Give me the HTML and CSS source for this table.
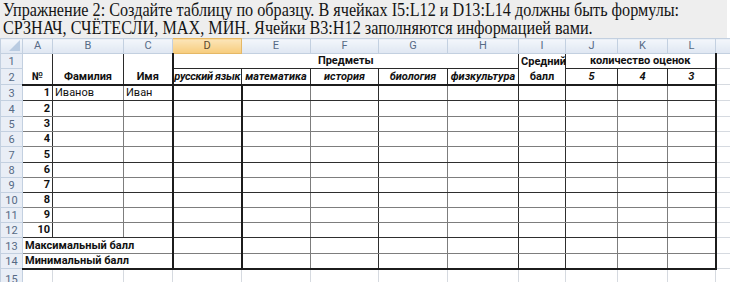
FILE: index.html
```html
<!DOCTYPE html>
<html lang="ru">
<head>
<meta charset="utf-8">
<title>Упражнение 2</title>
<link rel="stylesheet" href="styles.css">
</head>
<body>
<div class="task"><div class="task-text">Упражнение 2: Создайте таблицу по образцу. В ячейках I5:L12 и D13:L14 должны быть формулы:<br>СРЗНАЧ, СЧЁТЕСЛИ, MAX, МИН. Ячейки B3:H12 заполняются информацией вами.</div></div>
<table class="sheet">
<colgroup>
<col class="c-rn"><col class="c-a"><col class="c-b"><col class="c-c"><col class="c-d"><col class="c-e"><col class="c-f"><col class="c-g"><col class="c-h"><col class="c-i"><col class="c-j"><col class="c-k"><col class="c-l"><col class="c-m">
</colgroup>
<tr class="colhdr">
<th class="corner"><span class="tri"></span></th><th>A</th><th>B</th><th>C</th><th class="sel">D</th><th>E</th><th>F</th><th>G</th><th>H</th><th>I</th><th>J</th><th>K</th><th>L</th><th></th>
</tr>
<tr class="h15 r1">
<th class="rn">1</th>
<td rowspan="2" class="b ctr rd bt">№</td>
<td rowspan="2" class="b ctr rd bt">Фамилия</td>
<td rowspan="2" class="b ctr rt bt">Имя</td>
<td colspan="5" class="b ctr rd bd">Предметы</td>
<td class="b ctr rd bn">Средний</td>
<td colspan="3" class="b ctr rt bd">количество оценок</td>
<td class="x"></td>
</tr>
<tr class="h16 r2">
<th class="rn">2</th>
<td class="bi ctr rd bt tight">русский язык</td>
<td class="bi ctr rd bt">математика</td>
<td class="bi ctr rd bt">история</td>
<td class="bi ctr rd bt">биология</td>
<td class="bi ctr rd bt">физкультура</td>
<td class="b ctr rd bt">балл</td>
<td class="bi ctr rd bt">5</td>
<td class="bi ctr rd bt">4</td>
<td class="bi ctr rt bt">3</td>
<td class="x"></td>
</tr>
<tr class="h16 data bd">
<th class="rn">3</th><td class="b num">1</td><td>Иванов</td><td>Иван</td><td></td><td></td><td></td><td></td><td></td><td></td><td></td><td></td><td></td><td class="x"></td>
</tr>
<tr class="h16 data bm">
<th class="rn">4</th><td class="b num">2</td><td></td><td></td><td></td><td></td><td></td><td></td><td></td><td></td><td></td><td></td><td></td><td class="x"></td>
</tr>
<tr class="h15 data bm">
<th class="rn">5</th><td class="b num">3</td><td></td><td></td><td></td><td></td><td></td><td></td><td></td><td></td><td></td><td></td><td></td><td class="x"></td>
</tr>
<tr class="h15 data bm">
<th class="rn">6</th><td class="b num">4</td><td></td><td></td><td></td><td></td><td></td><td></td><td></td><td></td><td></td><td></td><td></td><td class="x"></td>
</tr>
<tr class="h16 data bd">
<th class="rn">7</th><td class="b num">5</td><td></td><td></td><td></td><td></td><td></td><td></td><td></td><td></td><td></td><td></td><td></td><td class="x"></td>
</tr>
<tr class="h15 data bm">
<th class="rn">8</th><td class="b num">6</td><td></td><td></td><td></td><td></td><td></td><td></td><td></td><td></td><td></td><td></td><td></td><td class="x"></td>
</tr>
<tr class="h15 data bd">
<th class="rn">9</th><td class="b num">7</td><td></td><td></td><td></td><td></td><td></td><td></td><td></td><td></td><td></td><td></td><td></td><td class="x"></td>
</tr>
<tr class="h15 data bm">
<th class="rn">10</th><td class="b num">8</td><td></td><td></td><td></td><td></td><td></td><td></td><td></td><td></td><td></td><td></td><td></td><td class="x"></td>
</tr>
<tr class="h15 data bm">
<th class="rn">11</th><td class="b num">9</td><td></td><td></td><td></td><td></td><td></td><td></td><td></td><td></td><td></td><td></td><td></td><td class="x"></td>
</tr>
<tr class="h15 data bd">
<th class="rn">12</th><td class="b num">10</td><td></td><td></td><td></td><td></td><td></td><td></td><td></td><td></td><td></td><td></td><td></td><td class="x"></td>
</tr>
<tr class="h16 tot bm">
<th class="rn">13</th><td colspan="3" class="b">Максимальный балл</td><td></td><td></td><td></td><td></td><td></td><td></td><td></td><td></td><td></td><td class="x"></td>
</tr>
<tr class="h15 tot bt2">
<th class="rn">14</th><td colspan="3" class="b">Минимальный балл</td><td></td><td></td><td></td><td></td><td></td><td></td><td></td><td></td><td></td><td class="x"></td>
</tr>
<tr class="r15">
<th class="rn">15</th><td></td><td></td><td></td><td></td><td></td><td></td><td></td><td></td><td></td><td></td><td></td><td></td><td class="x"></td>
</tr>
</table>
</body>
</html>
```
FILE: styles.css
```css
html, body {
  margin: 0;
  padding: 0;
  overflow: hidden;
  background: #ffffff;
}
body {
  width: 730px;
  height: 282px;
}
.task {
  box-sizing: border-box;
  height: 38px;
  width: 727px;
  padding: 1px 0 0 3px;
  background: #eeeeee;
  overflow: hidden;
}
.task-text {
  font-family: "Liberation Serif", "Times New Roman", serif;
  font-size: 19px;
  line-height: 18px;
  color: #141414;
  white-space: nowrap;
  transform: scaleX(0.852);
  transform-origin: 0 0;
}
.sheet {
  border-collapse: collapse;
  table-layout: fixed;
  width: 745px;
  font-family: Roboto, "Liberation Sans", Arial, sans-serif;
  font-size: 11px;
  color: #111111;
}
.c-rn { width: 22px; }
.c-a { width: 30px; }
.c-b { width: 71px; }
.c-c { width: 49px; }
.c-d { width: 69px; }
.c-e { width: 69px; }
.c-f { width: 68px; }
.c-g { width: 69px; }
.c-h { width: 71px; }
.c-i { width: 47px; }
.c-j { width: 52px; }
.c-k { width: 50px; }
.c-l { width: 48px; }
.c-m { width: 30px; }

.sheet td {
  padding: 0 2px 1px;
  line-height: 12px;
  vertical-align: bottom;
  white-space: nowrap;
  overflow: visible;
  border-top: none;
  border-left: none;
  border-right: 1px solid #d6dae0;
  border-bottom: 1px solid #d6dae0;
}
.sheet td.tight {
  padding: 0 0 1px;
  letter-spacing: -0.3px;
}
.sheet th {
  padding: 0;
  font-weight: normal;
  font-size: 11px;
  line-height: 12px;
  color: #566a85;
  background: linear-gradient(#f3f6fb, #dfe7f2);
  border: 1px solid #c3d0e0;
  text-align: center;
}
.colhdr { height: 15px; }
.colhdr th { vertical-align: middle; }
.colhdr th.sel {
  background: linear-gradient(#fce5b8, #f7cc7c);
  border-color: #e5b866;
  color: #5b4a30;
}
.corner { position: relative; }
.tri {
  position: absolute;
  right: 2px;
  bottom: 2px;
  width: 0;
  height: 0;
  border-left: 11px solid transparent;
  border-bottom: 11px solid #b9cbe1;
}
.sheet th.rn {
  vertical-align: bottom;
  background: #e9eef6;
}
.r15 .rn { vertical-align: top; padding-top: 2px; }
.h15 { height: 15px; }
.h16 { height: 16px; }
.r15 { height: 18px; }

.b { font-weight: bold; }
.bi { font-weight: bold; font-style: italic; }
.ctr { text-align: center; }
.num { text-align: right; }

/* explicit borders for header block */
.sheet td.rd { border-right: 1px solid #2a2a2a; }
.sheet td.rt { border-right: 2px solid #1c1c1c; }
.sheet td.bd { border-bottom: 1px solid #2a2a2a; }
.sheet td.bt { border-bottom: 2px solid #1c1c1c; }
.sheet td.bn { border-bottom: none; }

/* column right borders in body rows */
.data td:nth-child(2) { border-right: 1px solid #2e2e2e; }
.data td:nth-child(3) { border-right: 1px solid #7d7d7d; }
.data td:nth-child(4),
.tot td:nth-child(2) { border-right: 2px solid #1c1c1c; }
.data td:nth-child(5),
.tot td:nth-child(3) { border-right: 2px solid #1c1c1c; }
.data td:nth-child(6),
.tot td:nth-child(4) { border-right: 1px solid #7d7d7d; }
.data td:nth-child(7),
.tot td:nth-child(5) { border-right: 1px solid #2e2e2e; }
.data td:nth-child(8),
.tot td:nth-child(6) { border-right: 1px solid #7d7d7d; }
.data td:nth-child(9),
.tot td:nth-child(7) { border-right: 1px solid #2e2e2e; }
.data td:nth-child(10),
.tot td:nth-child(8) { border-right: 1px solid #2e2e2e; }
.data td:nth-child(11),
.tot td:nth-child(9) { border-right: 1px solid #7d7d7d; }
.data td:nth-child(12),
.tot td:nth-child(10) { border-right: 1px solid #7d7d7d; }
.data td:nth-child(13),
.tot td:nth-child(11) { border-right: 2px solid #1c1c1c; }

/* row bottom borders */
.bd td:not(.x) { border-bottom: 1px solid #2e2e2e; }
.bm td:not(.x) { border-bottom: 1px solid #7d7d7d; }
.bt2 td:not(.x) { border-bottom: 2px solid #1c1c1c; }
```
